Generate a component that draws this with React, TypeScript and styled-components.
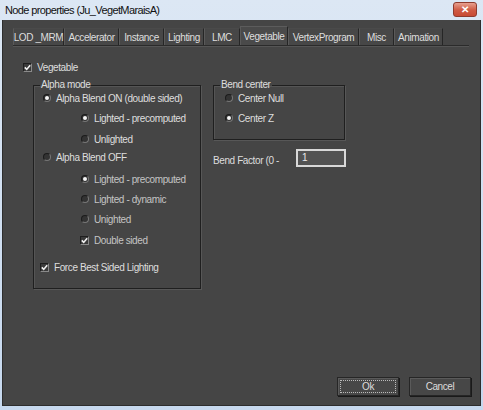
import React from "react";
import styled, { createGlobalStyle } from "styled-components";

const Global = createGlobalStyle`
  html, body { margin: 0; padding: 0; background: #c9d9ec; }
  body { font-family: "Liberation Sans", Arial, sans-serif; }
`;

const Window = styled.div`
  width: 483px;
  height: 410px;
  box-sizing: border-box;
  display: flex;
  flex-direction: column;
  background: linear-gradient(#dce7f4, #c6d8ee);
  padding: 0 2px 4px 2px;
`;

const TitleBar = styled.div`
  height: 20px;
  display: flex;
  align-items: center;
  justify-content: space-between;
  padding: 0 4px 0 3px;
`;

const Title = styled.span`
  font-size: 11px;
  color: #111;
  letter-spacing: -0.62px;
`;

const CloseBtn = styled.div`
  width: 22px;
  height: 13px;
  margin-top: -1px;
  border-radius: 3px;
  border: 1px solid #8e3b2e;
  background: linear-gradient(#e8a08f, #cf5a43 55%, #c84a33);
  display: flex;
  align-items: center;
  justify-content: center;
  color: #fff;
  font-size: 10px;
  font-weight: bold;
  line-height: 1;
`;

const Client = styled.div`
  flex: 1;
  background: #454545;
  border: 1px solid #2d2d2d;
  border-top: none;
  display: flex;
  flex-direction: column;
  padding: 6px 8px 9px 9px;
  color: #dcdcdc;
  font-size: 10px;
  letter-spacing: -0.4px;
`;

const TabBar = styled.div`
  display: flex;
  align-items: flex-end;
  height: 19px;
  border-bottom: 1px solid #2b2b2b;
  box-shadow: 0 1px 0 #555;
  margin: 0 3px 0 1px;
`;

const Tab = styled.div<{ $w: number; $active?: boolean }>`
  width: ${(p) => p.$w}px;
  box-sizing: border-box;
  height: ${(p) => (p.$active ? 19 : 17)}px;
  display: flex;
  align-items: center;
  justify-content: center;
  border-left: 1px solid #5a5a5a;
  border-right: 1px solid #262626;
  border-top: 1px solid ${(p) => (p.$active ? "#5c5c5c" : "#4a4a4a")};
  background: ${(p) => (p.$active ? "#4a4a4a" : "#474747")};
  color: #dedede;
  font-size: 10px;
  white-space: nowrap;
`;

const Page = styled.div`
  flex: 1;
  display: flex;
  flex-direction: column;
  padding: 15px 0 0 11px;
`;

const Row = styled.div<{ $indent?: number; $h?: number; $mt?: number }>`
  display: flex;
  align-items: center;
  height: ${(p) => p.$h ?? 14}px;
  margin-top: ${(p) => p.$mt ?? 0}px;
  padding-left: ${(p) => p.$indent ?? 0}px;
  gap: 5px;
  white-space: nowrap;
`;

const Label = styled.span<{ $dim?: boolean }>`
  color: ${(p) => (p.$dim ? "#c4c4c4" : "#dedede")};
`;

const Box = styled.span`
  width: 9px;
  height: 9px;
  box-sizing: border-box;
  border: 1px solid #1e1e1e;
  border-right-color: #8a8a8a;
  border-bottom-color: #8a8a8a;
  background: #3a3a3a;
  display: inline-flex;
  align-items: center;
  justify-content: center;
  flex: none;
`;

const Radio = styled.span<{ $on?: boolean }>`
  width: 8px;
  height: 8px;
  box-sizing: border-box;
  border-radius: 50%;
  border: 1px solid #1c1c1c;
  border-right-color: #777;
  border-bottom-color: #777;
  background: #333;
  display: inline-flex;
  align-items: center;
  justify-content: center;
  flex: none;
  &::after {
    content: "";
    display: ${(p) => (p.$on ? "block" : "none")};
    width: 4px;
    height: 4px;
    border-radius: 50%;
    background: #f4f4f4;
  }
`;

const Columns = styled.div`
  display: flex;
  align-items: flex-start;
  gap: 12px;
  margin-top: 7px;
  margin-left: 10px;
`;

const Group = styled.fieldset<{ $w: number; $h: number }>`
  width: ${(p) => p.$w}px;
  height: ${(p) => p.$h}px;
  box-sizing: border-box;
  margin: 0;
  border: 1px solid #1f1f1f;
  box-shadow: 1px 1px 0 #575757, inset 1px 1px 0 #555;
  padding: 0 0 0 5px;
  display: flex;
  flex-direction: column;
`;

const Legend = styled.legend`
  padding: 0 1px;
  margin-left: 1px;
  font-size: 10px;
  color: #dedede;
  line-height: 10px;
`;

const RightCol = styled.div`
  display: flex;
  flex-direction: column;
`;

const FactorRow = styled.div`
  display: flex;
  align-items: flex-start;
  margin-top: 9px;
`;

const FactorLabel = styled.span`
  width: 83px;
  padding-top: 6px;
  color: #dedede;
`;

const Input = styled.div`
  width: 50px;
  height: 18px;
  box-sizing: border-box;
  border: 2px solid #d8d8d8;
  background: #525252;
  color: #e8e8e8;
  padding: 1px 0 0 4px;
  font-size: 10px;
`;

const Footer = styled.div`
  display: flex;
  justify-content: flex-end;
  gap: 10px;
  padding-right: 1px;
`;

const Button = styled.div<{ $focus?: boolean }>`
  width: 62px;
  height: 19px;
  box-sizing: border-box;
  border: 1px solid #262626;
  box-shadow: inset 1px 1px 0 #5a5a5a, 1px 1px 0 #1a1a1a;
  background: #474747;
  display: flex;
  align-items: center;
  justify-content: center;
  position: relative;
  color: #dcdcdc;
  font-size: 10px;
  &::after {
    content: "";
    display: ${(p) => (p.$focus ? "block" : "none")};
    position: absolute;
    inset: 2px;
    border: 1px dotted #bbb;
  }
`;

const Check = () => (
  <svg width="7" height="7" viewBox="0 0 7 7">
    <path d="M0.8 3.4 L2.7 5.4 L6.2 1.2" fill="none" stroke="#f2f2f2" strokeWidth="1.6" />
  </svg>
);

const tabs: [string, number][] = [
  ["LOD _MRM", 51],
  ["Accelerator", 55],
  ["Instance", 45],
  ["Lighting", 40],
  ["LMC", 36],
  ["Vegetable", 48],
  ["VertexProgram", 71],
  ["Misc", 35],
  ["Animation", 49],
];

export default function App() {
  return (
    <>
      <Global />
      <Window>
        <TitleBar>
          <Title>Node properties (Ju_VegetMaraisA)</Title>
          <CloseBtn>✕</CloseBtn>
        </TitleBar>
        <Client>
          <TabBar>
            {tabs.map(([t, w]) => (
              <Tab key={t} $w={w} $active={t === "Vegetable"}>
                {t}
              </Tab>
            ))}
          </TabBar>
          <Page>
            <Row $h={12}>
              <Box>
                <Check />
              </Box>
              <Label>Vegetable</Label>
            </Row>
            <Columns>
              <Group $w={168} $h={209}>
                <Legend>Alpha mode</Legend>
                <Row $indent={4} $mt={1}>
                  <Radio $on />
                  <Label>Alpha Blend ON (double sided)</Label>
                </Row>
                <Row $indent={42} $mt={6}>
                  <Radio $on />
                  <Label>Lighted - precomputed</Label>
                </Row>
                <Row $indent={42} $mt={7}>
                  <Radio />
                  <Label>Unlighted</Label>
                </Row>
                <Row $indent={4} $mt={4}>
                  <Radio />
                  <Label>Alpha Blend OFF</Label>
                </Row>
                <Row $indent={42} $mt={8}>
                  <Radio $on />
                  <Label $dim>Lighted - precomputed</Label>
                </Row>
                <Row $indent={42} $mt={6}>
                  <Radio />
                  <Label $dim>Lighted - dynamic</Label>
                </Row>
                <Row $indent={42} $mt={6}>
                  <Radio />
                  <Label $dim>Unighted</Label>
                </Row>
                <Row $indent={41} $mt={7}>
                  <Box>
                    <Check />
                  </Box>
                  <Label $dim>Double sided</Label>
                </Row>
                <Row $indent={1} $mt={13}>
                  <Box>
                    <Check />
                  </Box>
                  <Label>Force Best Sided Lighting</Label>
                </Row>
              </Group>
              <RightCol>
                <Group $w={132} $h={60}>
                  <Legend>Bend center</Legend>
                  <Row $indent={6} $mt={1}>
                    <Radio />
                    <Label>Center Null</Label>
                  </Row>
                  <Row $indent={6} $mt={6}>
                    <Radio $on />
                    <Label>Center Z</Label>
                  </Row>
                </Group>
                <FactorRow>
                  <FactorLabel>Bend Factor (0 -</FactorLabel>
                  <Input>1</Input>
                </FactorRow>
              </RightCol>
            </Columns>
          </Page>
          <Footer>
            <Button $focus>Ok</Button>
            <Button>Cancel</Button>
          </Footer>
        </Client>
      </Window>
    </>
  );
}
